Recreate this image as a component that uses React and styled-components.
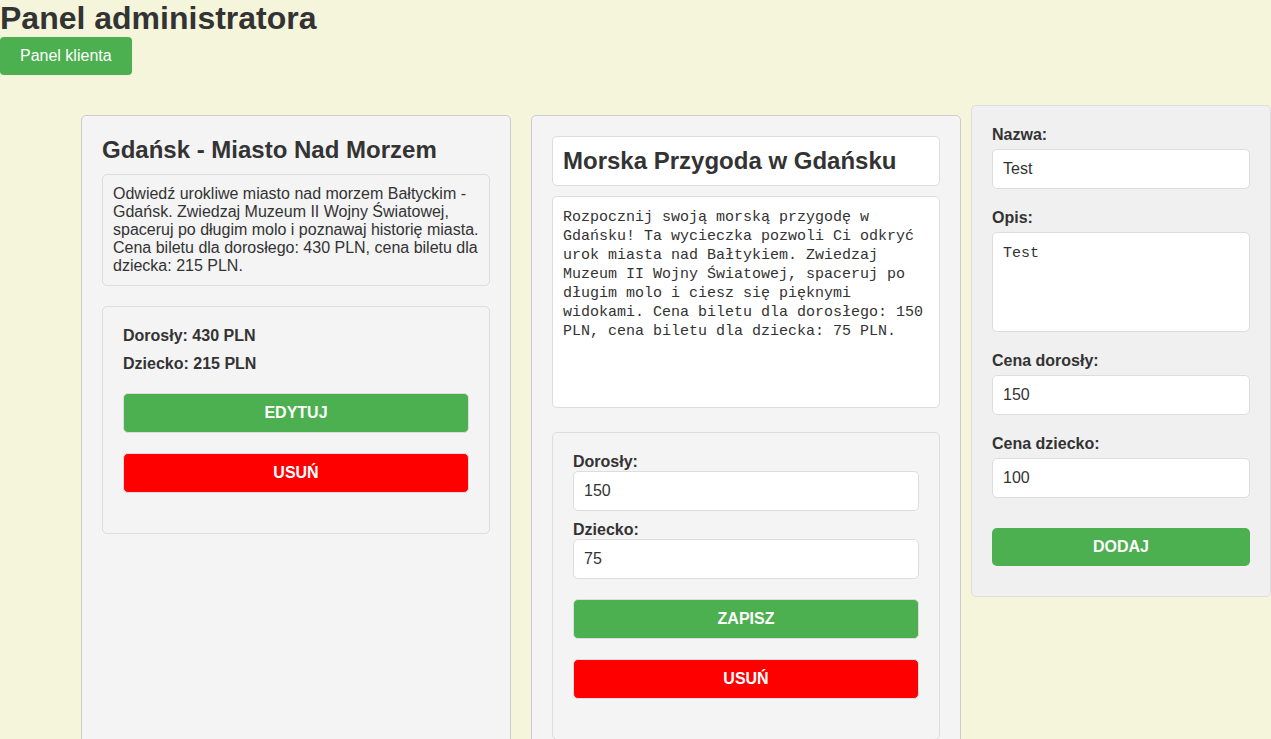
import React from "react";
import styled, { createGlobalStyle, css } from "styled-components";

const GlobalStyle = createGlobalStyle`
  * {
    box-sizing: border-box;
    margin: 0;
    padding: 0;
  }

  body {
    background: #f5f5dc;
    color: #333;
    font-family: Arial, "Liberation Sans", sans-serif;
    font-size: 16px;
    line-height: 18px;
  }
`;

const PageTitle = styled.h1`
  font-size: 32px;
  line-height: 37px;
`;

const HeaderButton = styled.button`
  display: block;
  padding: 10px 20px;
  border: none;
  border-radius: 4px;
  background: #4caf50;
  color: #fff;
  font: inherit;
  cursor: pointer;
`;

const Main = styled.main`
  display: flex;
  align-items: flex-start;
  margin-top: 30px;
`;

const TripList = styled.section`
  flex: 1;
  display: flex;
  justify-content: flex-end;
`;

const TripCard = styled.article`
  flex: 0 1 430px;
  min-width: 0;
  margin: 10px;
  padding: 20px;
  border: 1px solid #ccc;
  border-radius: 5px;
  background: #f4f4f4;
`;

const TripName = styled.h2`
  margin-bottom: 10px;
  font-size: 24px;
  line-height: 28px;
`;

const TripDescription = styled.p`
  padding: 10px;
  border: 1px solid #ddd;
  border-radius: 5px;
`;

const PriceBox = styled.div`
  margin-top: ${(p) => (p.$editing ? 24 : 20)}px;
  padding: 20px;
  border: 1px solid #ddd;
  border-radius: 5px;
`;

const FieldGroup = styled.div`
  display: flex;
  flex-direction: column;
  gap: ${(p) => (p.$compact ? 10 : 20)}px;
`;

const PriceLine = styled.p`
  font-weight: bold;
`;

const fieldStyle = css`
  display: block;
  width: 100%;
  padding: 10px;
  border: 1px solid #ddd;
  border-radius: 5px;
  background: #fff;
  color: #333;
`;

const Input = styled.input`
  ${fieldStyle}
  height: 40px;
  font: inherit;
`;

const TitleInput = styled.input`
  ${fieldStyle}
  height: 50px;
  margin-bottom: 10px;
  font: bold 24px/28px Arial, "Liberation Sans", sans-serif;
`;

const TextArea = styled.textarea`
  ${fieldStyle}
  height: ${(p) => (p.$tall ? 212 : 100)}px;
  padding: 11px 10px 9px;
  font: 15px/19px Consolas, "Liberation Mono", monospace;
  resize: none;
`;

const Label = styled.label`
  display: block;
  margin-bottom: ${(p) => (p.$compact ? 0 : 5)}px;
  font-weight: bold;
`;

const ActionButton = styled.button`
  display: block;
  width: 100%;
  height: 40px;
  margin: 20px 0;
  border: 1px solid #ddd;
  border-radius: 5px;
  background: ${(p) => (p.$danger ? "#f00" : "#4caf50")};
  color: #fff;
  font: inherit;
  font-weight: bold;
  text-transform: uppercase;
  cursor: pointer;
`;

const AddButton = styled(ActionButton)`
  height: 38px;
  margin: 30px 0 10px;
  border: none;
`;

const AddForm = styled.form`
  flex: 0 0 300px;
  padding: 20px;
  border: 1px solid #ddd;
  border-radius: 5px;
  background: #f0f0f0;
`;

const description =
  "Odwiedź urokliwe miasto nad morzem Bałtyckim - Gdańsk. Zwiedzaj Muzeum II Wojny Światowej, spaceruj po długim molo i poznawaj historię miasta. Cena biletu dla dorosłego: 430 PLN, cena biletu dla dziecka: 215 PLN.";

const editedDescription =
  "Rozpocznij swoją morską przygodę w Gdańsku! Ta wycieczka pozwoli Ci odkryć urok miasta nad Bałtykiem. Zwiedzaj Muzeum II Wojny Światowej, spaceruj po długim molo i ciesz się pięknymi widokami. Cena biletu dla dorosłego: 150 PLN, cena biletu dla dziecka: 75 PLN.";

function NumberField({ id, label, value, compact }) {
  return (
    <div>
      <Label htmlFor={id} $compact={compact}>{label}</Label>
      <Input id={id} type="number" defaultValue={value} />
    </div>
  );
}

export default function App() {
  return (
    <>
      <GlobalStyle />
      <header>
        <PageTitle>Panel administratora</PageTitle>
        <HeaderButton type="button">Panel klienta</HeaderButton>
      </header>
      <Main>
        <TripList>
          <TripCard>
            <TripName>Gdańsk - Miasto Nad Morzem</TripName>
            <TripDescription>{description}</TripDescription>
            <PriceBox>
              <FieldGroup $compact>
                <PriceLine>Dorosły: 430 PLN</PriceLine>
                <PriceLine>Dziecko: 215 PLN</PriceLine>
              </FieldGroup>
              <ActionButton type="button">Edytuj</ActionButton>
              <ActionButton type="button" $danger>Usuń</ActionButton>
            </PriceBox>
          </TripCard>
          <TripCard>
            <TitleInput type="text" aria-label="Nazwa" defaultValue="Morska Przygoda w Gdańsku" />
            <TextArea $tall aria-label="Opis" spellCheck={false} defaultValue={editedDescription} />
            <PriceBox $editing>
              <FieldGroup $compact>
                <NumberField id="edit-adult" label="Dorosły:" value="150" compact />
                <NumberField id="edit-child" label="Dziecko:" value="75" compact />
              </FieldGroup>
              <ActionButton type="button">Zapisz</ActionButton>
              <ActionButton type="button" $danger>Usuń</ActionButton>
            </PriceBox>
          </TripCard>
        </TripList>
        <AddForm>
          <FieldGroup>
            <div>
              <Label htmlFor="new-name">Nazwa:</Label>
              <Input id="new-name" type="text" defaultValue="Test" />
            </div>
            <div>
              <Label htmlFor="new-description">Opis:</Label>
              <TextArea id="new-description" spellCheck={false} defaultValue="Test" />
            </div>
            <NumberField id="new-adult" label="Cena dorosły:" value="150" />
            <NumberField id="new-child" label="Cena dziecko:" value="100" />
          </FieldGroup>
          <AddButton type="button">Dodaj</AddButton>
        </AddForm>
      </Main>
    </>
  );
}
